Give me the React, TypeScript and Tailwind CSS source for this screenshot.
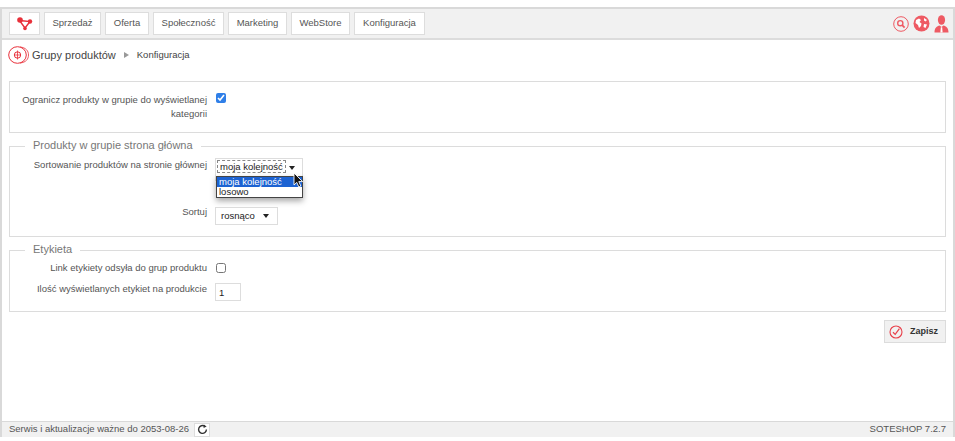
const navItems = [
  { label: "Sprzedaż", width: "w-[57px]" },
  { label: "Oferta", width: "w-[44px]" },
  { label: "Społeczność", width: "w-[71px]" },
  { label: "Marketing", width: "w-[59px]" },
  { label: "WebStore", width: "w-[59px]" },
  { label: "Konfiguracja", width: "w-[71px]" },
];

function LogoIcon() {
  return (
    <svg width="16" height="14" viewBox="0 0 16 14" className="text-[#e8303a]">
      <path d="M2.5 3.5 L13 4.5 L8 11 Z" fill="none" stroke="currentColor" strokeWidth="1.4" />
      <circle cx="3" cy="3" r="2.8" fill="currentColor" />
      <circle cx="13" cy="4.5" r="2.2" fill="currentColor" />
      <circle cx="8" cy="11.5" r="1.8" fill="currentColor" />
    </svg>
  );
}

function SearchCircle() {
  return (
    <svg width="16" height="16" viewBox="0 0 16 16" fill="none" stroke="#ee5a63">
      <circle cx="8" cy="8" r="7.3" strokeWidth="1" />
      <circle cx="7.3" cy="7.2" r="2.6" strokeWidth="1.4" />
      <path d="M9.2 9.2 L11.6 11.6" strokeWidth="1.8" />
    </svg>
  );
}

function GlobeIcon() {
  return (
    <svg width="17" height="17" viewBox="0 0 17 17">
      <circle cx="8.5" cy="8.5" r="8" fill="#ee5a63" />
      <path d="M3 5 L6 3.5 L8 5 L6.5 7 L8.5 8.5 L8 11 L6 13 L5 10 L2.5 8 Z" fill="#fff" />
      <path d="M11 3 L14 5 L12.5 6.5 L11 5.5 Z M11 9 L14 9.5 L12.5 13 L10.5 12 Z" fill="#fff" />
    </svg>
  );
}

function UserIcon() {
  return (
    <svg width="15" height="18" viewBox="0 0 15 18">
      <ellipse cx="7.5" cy="5" rx="3.6" ry="4.8" fill="#ee5a63" />
      <path d="M0.5 17.5 C0.5 12.5 3 11.2 5.5 10.5 L7.5 12 L9.5 10.5 C12 11.2 14.5 12.5 14.5 17.5 Z" fill="#ee5a63" />
      <path d="M6.8 12.2 H8.2 L8.6 17.5 H6.4 Z" fill="#fff" />
    </svg>
  );
}

function ModuleIcon() {
  return (
    <svg width="21" height="18" viewBox="0 0 21 18" fill="none" stroke="#e8303a">
      <ellipse cx="9.5" cy="9" rx="8.8" ry="8.3" strokeWidth="1" />
      <path d="M12 1 C18 1.5 20.5 5 20.5 9 C20.5 13 18 16.5 12 17" strokeWidth="0.8" />
      <circle cx="9.5" cy="9" r="3.2" strokeWidth="1" />
      <path d="M9.5 4.5 V13.5 M6 9 H13" strokeWidth="0.8" />
    </svg>
  );
}

function SaveIcon() {
  return (
    <svg width="14" height="14" viewBox="0 0 14 14" fill="none" stroke="#e8404a">
      <circle cx="7" cy="7" r="6" strokeWidth="1.1" />
      <path d="M4 7.3 L6.2 9.4 L10.4 3.6" strokeWidth="1.2" />
    </svg>
  );
}

function RefreshIcon() {
  return (
    <svg width="11" height="11" viewBox="0 0 11 11" fill="none" stroke="#333">
      <path d="M9.4 5.5 A3.9 3.9 0 1 1 7.6 2.2" strokeWidth="1.4" />
      <path d="M6.8 0.4 L9.6 2.6 L6.6 4 Z" fill="#333" stroke="none" />
    </svg>
  );
}

function Cursor() {
  return (
    <svg width="11" height="16" viewBox="0 0 11 16">
      <path d="M1 1 V13 L3.8 10.4 L5.8 15 L7.8 14 L5.8 9.6 H9.6 Z" fill="#111" stroke="#fff" strokeWidth="0.9" />
    </svg>
  );
}

function Caret() {
  return <span className="block w-0 h-0 border-x-[3.5px] border-x-transparent border-t-[4px] border-t-[#222]" />;
}

function Row({
  label,
  className,
  controlClass,
  children,
}: {
  label: string;
  className?: string;
  controlClass?: string;
  children: React.ReactNode;
}) {
  return (
    <div className={`flex ${className ?? ""}`}>
      <label className="w-[197px] shrink-0 text-right leading-[14px]">{label}</label>
      <div className={`ml-[8px] ${controlClass ?? ""}`}>{children}</div>
    </div>
  );
}

export default function App() {
  return (
    <div className="pt-[7px] h-[441px] bg-white text-[9.5px] text-[#555] font-['Liberation_Sans',Arial,sans-serif]">
      <div className="h-[430px] flex flex-col border-x-2 border-t-2 border-[#d9d9d9]">
        {/* Top nav */}
        <div className="h-[31px] shrink-0 flex items-center justify-between pl-[7px] pr-[4px] bg-[#f1f1f1] border-b-2 border-[#dcdcdc]">
          <div className="flex gap-[4px]">
            <div className="w-[31px] h-[23px] flex items-center justify-center bg-white border border-[#dddddd]">
              <LogoIcon />
            </div>
            {navItems.map((item) => (
              <div
                key={item.label}
                className={`${item.width} h-[23px] flex items-center justify-center bg-white border border-[#dddddd]`}
              >
                {item.label}
              </div>
            ))}
          </div>
          <div className="flex items-center gap-[4px]">
            <SearchCircle />
            <GlobeIcon />
            <UserIcon />
          </div>
        </div>

        {/* Breadcrumb */}
        <div className="h-[30px] shrink-0 flex items-center pl-[6px]">
          <ModuleIcon />
          <span className="ml-[3px] text-[11px] text-[#444]">Grupy produktów</span>
          <span className="ml-[8px] w-0 h-0 border-y-[3px] border-y-transparent border-l-[5px] border-l-[#999]" />
          <span className="ml-[8px] text-[#444]">Konfiguracja</span>
        </div>

        <div className="flex-1 px-[7px] pt-[11px]">
          <div className="h-[52px] pt-[11px] border border-[#dcdcdc]">
            <Row label="Ogranicz produkty w grupie do wyświetlanej kategorii">
              <input type="checkbox" defaultChecked className="block ml-[1px] w-[10px] h-[10px] accent-[#2f7fe8]" />
            </Row>
          </div>

          {/* Produkty */}
          <fieldset className="mt-[5px] h-[99px] border border-[#dcdcdc]">
            <legend className="ml-[15px] px-[8px] pb-[3px] text-[11px] leading-[14px] text-[#777]">
              Produkty w grupie strona główna
            </legend>
            <Row label="Sortowanie produktów na stronie głównej" className="mt-[3px]">
              <div className="relative">
                <div className="w-[88px] h-[23px] flex items-start gap-[3px] pl-[1px] pt-[1px] bg-white border border-[#dddddd]">
                  <span className="w-[69px] h-[13px] pl-[2px] leading-[11px] whitespace-nowrap text-[#222] border border-dashed border-[#888]">
                    moja kolejność
                  </span>
                  <span className="mt-[6px]">
                    <Caret />
                  </span>
                </div>
                <div className="absolute left-[1px] top-[18px] z-10 w-[87px] border border-[#444] bg-white leading-[10px] text-[#222] shadow-[0_3px_6px_rgba(0,0,0,0.35)]">
                  <div className="bg-[#1c62d2] pl-[2px] text-white">moja kolejność</div>
                  <div className="pl-[2px]">losowo</div>
                </div>
                <div className="absolute left-[78px] top-[14px] z-20">
                  <Cursor />
                </div>
              </div>
            </Row>
            <Row label="Sortuj" className="mt-[24px]" controlClass="mt-[2px]">
              <div className="w-[63px] h-[18px] flex items-center gap-[8px] pl-[5px] bg-white border border-[#dddddd] text-[#222]">
                rosnąco
                <Caret />
              </div>
            </Row>
          </fieldset>

          {/* Etykieta */}
          <fieldset className="mt-[5px] h-[70px] border border-[#dcdcdc]">
            <legend className="ml-[15px] px-[8px] pb-[3px] text-[11px] leading-[14px] text-[#777]">Etykieta</legend>
            <Row label="Link etykiety odsyła do grup produktu" className="mt-[2px]" controlClass="mt-[2px]">
              <input type="checkbox" className="block ml-[1px] w-[10px] h-[10px]" />
            </Row>
            <Row label="Ilość wyświetlanych etykiet na produkcie" className="mt-[7px]" controlClass="mt-[1px]">
              <input
                defaultValue="1"
                className="block w-[26px] h-[18px] pl-[3px] bg-white border border-[#dddddd] text-[#222] outline-none"
              />
            </Row>
          </fieldset>

          <div className="flex justify-end mt-[8px]">
            <button className="w-[62px] h-[23px] flex items-center pl-[4px] gap-[7px] bg-[#f1f1f1] border border-[#dcdcdc] text-[9px] font-bold text-[#333]">
              <SaveIcon />
              Zapisz
            </button>
          </div>
        </div>

        {/* Footer */}
        <div className="h-[16px] shrink-0 flex items-center justify-between px-[7px] bg-[#f1f1f1] border-t border-[#d9d9d9]">
          <div className="flex items-center gap-[5px]">
            <span>Serwis i aktualizacje ważne do 2053-08-26</span>
            <span className="w-[16px] h-[14px] flex items-center justify-center bg-white border border-[#dddddd]">
              <RefreshIcon />
            </span>
          </div>
          <span>SOTESHOP 7.2.7</span>
        </div>
      </div>
    </div>
  );
}
